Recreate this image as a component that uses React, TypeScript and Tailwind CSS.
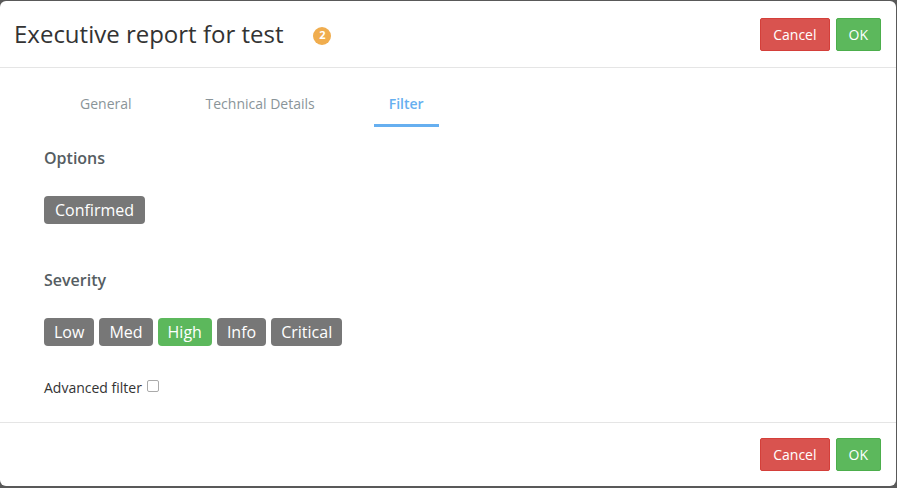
import React from "react";

const severities = [
  { label: "Low", active: false },
  { label: "Med", active: false },
  { label: "High", active: true },
  { label: "Info", active: false },
  { label: "Critical", active: false },
];

const tabs = [
  { label: "General", active: false },
  { label: "Technical Details", active: false },
  { label: "Filter", active: true },
];

function Actions() {
  return (
    <div className="flex items-center gap-[6px]">
      <button className="h-[33px] rounded-[2px] border border-[#d43f3a] bg-[#d9534f] px-[12px] text-[14px] text-white">
        Cancel
      </button>
      <button className="h-[33px] rounded-[2px] border border-[#4cae4c] bg-[#5cb85c] px-[12px] text-[14px] text-white">
        OK
      </button>
    </div>
  );
}

export default function App() {
  return (
    <div
      className="h-[488px] w-[897px] overflow-hidden bg-[#595959] pt-px"
      style={{ fontFamily: '"Open Sans", "Noto Sans", sans-serif' }}
    >
      <div className="flex h-[485px] w-[896px] flex-col rounded-[6px] bg-white">
        <header className="flex h-[67px] items-center justify-between border-b border-[#e5e5e5] pl-[14px] pr-[15px]">
          <div className="flex items-center">
            <h1 className="mb-[1px] text-[24px] leading-[33px] text-[#333]">Executive report for test</h1>
            <span className="ml-[30px] mt-[3px] flex h-[18px] w-[18px] items-center justify-center rounded-full bg-[#f0ad4e] text-[11px] font-bold text-white">
              2
            </span>
          </div>
          <Actions />
        </header>

        <nav className="mt-[16px] flex gap-[44px] pl-[65px]">
          {tabs.map((t) => (
            <div
              key={t.label}
              className={
                t.active
                  ? "border-b-[3px] border-[#66aff0] px-[15px] pt-[10px] pb-[10px] text-[14px] font-semibold leading-[20px] text-[#66aff0]"
                  : "border-b-[3px] border-transparent px-[15px] pt-[10px] pb-[10px] text-[14px] leading-[20px] text-[#8a9499]"
              }
            >
              {t.label}
            </div>
          ))}
        </nav>

        <div className="flex-1 px-[44px]">
          <h2 className="mt-[20px] text-[16px] font-semibold leading-[22px] text-[#555d62]">Options</h2>
          <div className="mt-[27px] flex">
            <span className="flex h-[28px] items-center rounded-[4px] bg-[#777] px-[11px] text-[16px] text-white">
              Confirmed
            </span>
          </div>

          <h2 className="mt-[45px] text-[16px] font-semibold leading-[22px] text-[#555d62]">Severity</h2>
          <div className="mt-[27px] flex gap-[5px]">
            {severities.map((s) => (
              <span
                key={s.label}
                className={
                  s.active
                    ? "flex h-[28px] items-center rounded-[4px] bg-[#5cb85c] px-[10px] text-[16px] text-white"
                    : "flex h-[28px] items-center rounded-[4px] bg-[#777] px-[10px] text-[16px] text-white"
                }
              >
                {s.label}
              </span>
            ))}
          </div>

          <label className="mt-[32px] flex items-center gap-[5px] text-[14px] leading-[20px] text-[#333]">
            Advanced filter
            <span className="mb-[4px] inline-block h-[12px] w-[12px] rounded-[2px] border border-[#aaa] bg-white" />
          </label>
        </div>

        <footer className="flex justify-end border-t border-[#e5e5e5] px-[15px] pt-[15px] pb-[15px]">
          <Actions />
        </footer>
      </div>
    </div>
  );
}
